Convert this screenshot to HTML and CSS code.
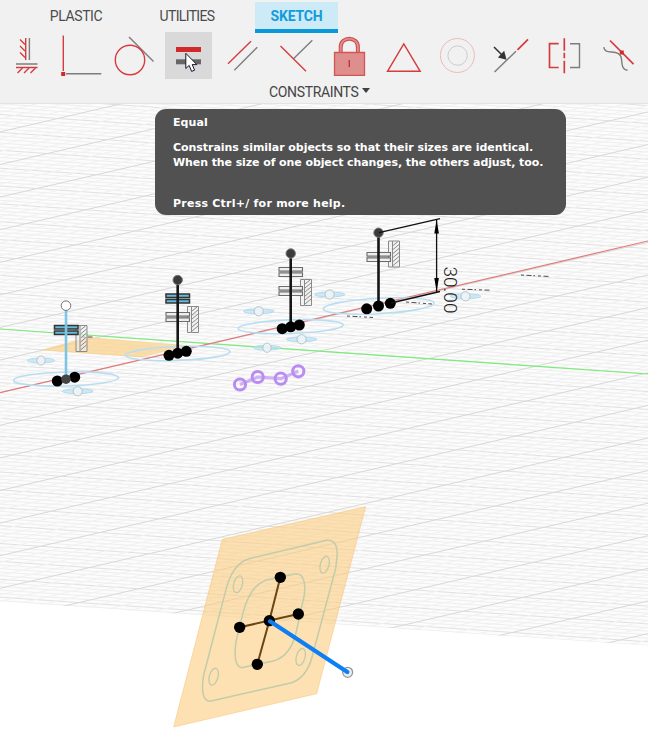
FILE: index.html
```html
<!DOCTYPE html>
<html lang="en">
<head>
<meta charset="utf-8">
<title>Sketch constraints</title>
<link rel="stylesheet" href="styles.css">
</head>
<body>
<header class="toolbar">
  <nav class="tabs">
    <span class="tab plastic">PLASTIC</span>
    <span class="tab utilities">UTILITIES</span>
    <span class="tab active"><b>SKETCH</b></span>
  </nav>
  <div class="tools">
    <svg class="tool" viewBox="3 32 47 47"><g class="r"><path d="M25.7 38V60M16 67.5H37.5"/><path d="M20 39.5l5 5M20 46l5 5M20 52.5l5 5M22.5 68l-5 5M29 68l-5 5M35.5 68l-5 5"/></g><path class="k" d="M29.4 38V60M16 64H37.5"/></svg>
    <svg class="tool" viewBox="57 32 47 47"><path class="r" d="M63.3 35.5V71"/><path class="rf" d="M61.2 72h4v4h-4z"/><path class="k" d="M66 73.8H101.3"/></svg>
    <svg class="tool" viewBox="111 32 47 47"><path class="k" d="M129 37l24.5 24.5"/><circle class="r" cx="130" cy="60" r="14.7"/></svg>
    <svg class="tool selected" viewBox="165 32 47 47"><path class="rf" d="M176 47h25v5h-25z"/><path fill="#666" d="M176 59.3h25v5h-25z"/><path d="M185.8 53.3v15.2l3.4-3.1 2.4 6 3-1.2-2.4-5.6h4.6z" fill="#fff" stroke="#151526" stroke-width="1"/></svg>
    <svg class="tool" viewBox="219 32 47 47"><path class="r" d="M228 63.8L251 41.2"/><path class="k" d="M234.3 70.3L257.3 47.3"/></svg>
    <svg class="tool" viewBox="273 32 47 47"><path class="k" d="M293.5 58.8L312.3 40.2"/><path class="r" d="M280.5 46L306 71.3"/></svg>
    <svg class="tool" viewBox="327 32 47 47"><path d="M340.7 53v-6c0-11 17.2-11 17.2 0v6" fill="none" stroke="#cf5050" stroke-width="4"/><path d="M340.7 52v-5c0-11 17.2-11 17.2 0v5" fill="none" stroke="#e09090" stroke-width="1.7"/><path d="M334.5 52.5h30v22.8h-30z" fill="#df8e8e" stroke="#d25555" stroke-width="1.3"/><path d="M349.3 60v7" stroke="#bd3434" stroke-width="1.4"/></svg>
    <svg class="tool" viewBox="381 32 47 47"><path class="r" d="M403.8 43.8L387.5 71.3H420.2z"/></svg>
    <svg class="tool" viewBox="435 32 47 47"><circle cx="457.4" cy="55.5" r="17" fill="none" stroke="#efb9b9"/><circle cx="457.6" cy="55.6" r="9.7" fill="none" stroke="#ccc"/></svg>
    <svg class="tool" viewBox="489 32 47 47"><path class="k" d="M494.5 72L516 51.2"/><path class="r thick" d="M517.5 49.8L528 39.3"/><path d="M494 47l8 8" stroke="#333" stroke-width="1.6"/><path d="M506.5 59.8l-2.3-9-6.3 6.7z" fill="#333"/></svg>
    <svg class="tool" viewBox="543 32 47 47"><path class="r thick" d="M558.7 43.7H549.5V67.5H558.7M564.3 38.3V50.7M564.3 52.8V58.3M564.3 60.7V73.2"/><path class="k" d="M570 43.7H579.5V67.5H570"/></svg>
    <svg class="tool" viewBox="597 32 47 47"><path class="k" d="M603.7 47.2c.8 4.5 3.8 4.6 7.5 4.8 6 .3 9.8 1.5 10.3 7 .4 5 .3 10.5 6 11.2"/><path class="r thick" d="M610 40.5L633.5 64.2"/><path class="rf" d="M619.8 50.5h4v4h-4z"/></svg>
  </div>
  <div class="group-name"><span>CONSTRAINTS</span><i class="caret"></i></div>
</header>
<main class="viewport">
  <svg class="scene" viewBox="0 104 648 641">
    <defs>
      <clipPath id="ground"><path d="M0 104H648V645.5L0 601.5z"/></clipPath>
      <g id="eq"><path d="M0 .5h23.5v3.6H0zM0 5.9h23.5v3.6H0z"/></g>
      <g id="hatch"><path d="M.5.5h4v26h-4zM4.5.5h7v26h-7" fill="#eee" fill-opacity=".6"/><path d="M5 5l5-4M5 9l6-5M5 13l6-5M5 17l6-5M5 21l6-5M5 25l6-5"/></g>
      <g id="ring"><ellipse rx="15.3" ry="2.4" fill="#b4def2" fill-opacity=".6" stroke="#b0dcf0" stroke-width="1"/><circle r="4.6" fill="#f3f6f8" fill-opacity=".8" stroke="#b4c1c8"/></g>
    </defs>
    <path d="M0 104H648V645.5L0 601.5z" fill="#fcfcfc"/>
    <g id="grid" clip-path="url(#ground)"></g>
    <path d="M40 350.3L88 337 189 345.5 142 357.5z" fill="#fbcf83" opacity=".68"/>
    <path d="M0 329L648 374" stroke="#7aec7a" stroke-width="1.2"/>
    <path d="M0 392.7L648 241" stroke="#e27b7b" stroke-width="1.2"/>
    <g fill="none" stroke="#b9def1" stroke-width="1.6">
      <ellipse cx="66" cy="379" rx="52.5" ry="7" transform="rotate(-1.5 66 379)"/>
      <ellipse cx="177.7" cy="353.5" rx="52.3" ry="7" transform="rotate(-2 177.7 353.5)"/>
      <ellipse cx="290.6" cy="326.7" rx="52.5" ry="6.8" transform="rotate(-2 290.6 326.7)"/>
      <ellipse cx="378.7" cy="306" rx="55.5" ry="7.7" transform="rotate(-3 378.7 306)"/>
    </g>
    <use href="#ring" transform="translate(41 360.5) scale(.9 1)"/><use href="#ring" x="77.7" y="391.3"/>
    <use href="#ring" x="258.7" y="311.3"/><use href="#ring" x="329.6" y="294.5"/>
    <use href="#ring" x="301.6" y="339.3"/><use href="#ring" transform="translate(267 347.7) scale(.9 1)"/><use href="#ring" x="465.5" y="296.3"/>
    <g stroke="#222" stroke-width="1" stroke-dasharray="3 2.5 5 2 1.5 3" opacity=".8">
      <path d="M347 316l26 1.5M406 302l26 2M462 289.2l29 1M521 275l29 1.5M82 337h11"/>
    </g>
    <g stroke="#8a8a8a" stroke-width="1" fill="none">
      <use href="#hatch" x="75.5" y="325"/><use href="#hatch" x="187" y="306"/><use href="#hatch" x="300" y="279"/><use href="#hatch" x="388" y="240.5"/>
    </g>
    <g stroke="#6c6c6c" stroke-width="1.1" fill="#eee">
      <use href="#eq" x="166" y="312"/><use href="#eq" x="279" y="267"/><use href="#eq" x="279" y="286"/><use href="#eq" x="367" y="252"/>
    </g>
    <g stroke="#333" stroke-width="1.5" fill="#65bbdd"><use href="#eq" x="54.5" y="325"/><use href="#eq" x="166" y="293.5"/></g>
    <path d="M66 306V379" stroke="#7dc5e6" stroke-width="2.6"/>
    <path d="M177.7 280V353M290.7 254V327M378.5 233V306" stroke="#161616" stroke-width="2.6"/>
    <circle cx="66" cy="305.7" r="4.8" fill="#fff" stroke="#777"/>
    <g fill="#3b3b3b" stroke="#777" stroke-width="1"><circle cx="177.7" cy="280" r="4.7"/><circle cx="290.7" cy="253.5" r="4.7"/><circle cx="378.5" cy="232.7" r="4.7"/></g>
    <g><circle cx="57.3" cy="381" r="5.5"/><circle cx="74.7" cy="377.2" r="5.5"/><circle cx="66" cy="379.2" r="4.8" fill="#444"/>
      <circle cx="169" cy="355.3" r="5.5"/><circle cx="177.7" cy="353.2" r="5.5"/><circle cx="186.3" cy="351.3" r="5.5"/>
      <circle cx="282.2" cy="328.7" r="5.5"/><circle cx="290.7" cy="326.8" r="5.5"/><circle cx="299.3" cy="325" r="5.5"/>
      <circle cx="366.7" cy="308.8" r="5.5"/><circle cx="378.5" cy="306" r="5.5"/><circle cx="390.3" cy="303.3" r="5.5"/></g>
    <path d="M379 232.7L440 218.7M391 303L440 291.5M436.6 219.5V292" fill="none" stroke="#111" stroke-width="1.3"/>
    <path d="M436.6 220l-2.3 13.500h4.6zM436.6 291.5l-2.3-13.500h4.6z"/>
    <text class="dimension" transform="translate(443.5 266.5) rotate(90)" textLength="47">30.00</text>
    <g fill="none" stroke="#b98cf0"><path d="M240 384.5L257.7 377 280.7 378.7 298.3 371.3" stroke-width="3.2" opacity=".65"/>
      <g stroke-width="3"><circle cx="240" cy="384.5" r="5.6"/><circle cx="257.7" cy="377" r="5.6"/><circle cx="280.7" cy="378.7" r="5.6"/><circle cx="298.3" cy="371.3" r="5.6"/></g></g>
    <g transform="translate(160 500) scale(.33333)">
      <path d="M187 118L617 20 470 581 41 681z" fill="#fbcb7c" fill-opacity=".58" stroke="#f8c77c" stroke-width="2.5" stroke-opacity=".7"/>
      <g fill="none" stroke="#c2ccaa" stroke-width="4.6">
        <path d="M268 176L500 121Q538 117 530 180L527 205 457 468Q440 533 395 548L150 604Q119 602 131 525L195 280Q215 190 268 176z"/>
        <path d="M320 240L408 221Q440 222 433 285L410 390Q394 468 340 483L245 503Q218 498 228 425L250 335Q271 256 320 240z"/>
        <g stroke-width="4"><ellipse cx="234" cy="253" rx="13" ry="26" transform="rotate(15 234 253)"/><ellipse cx="494" cy="194" rx="13" ry="26" transform="rotate(15 494 194)"/><ellipse cx="161" cy="530" rx="13" ry="26" transform="rotate(15 161 530)"/><ellipse cx="422" cy="471" rx="13" ry="26" transform="rotate(15 422 471)"/></g>
      </g>
      <path d="M361 232L328 362 292 493M239 382L415 342" fill="none" stroke="#6a4614" stroke-width="6"/>
      <circle cx="361" cy="232" r="17"/><circle cx="415" cy="342" r="17"/><circle cx="328" cy="362" r="17"/><circle cx="239" cy="382" r="17"/><circle cx="292" cy="493" r="17"/>
      <circle cx="563" cy="517" r="15" fill="#e8edf2" stroke="#999" stroke-width="4"/>
      <path d="M330 364L562 516" stroke="#0d7ff5" stroke-width="12.5" stroke-linecap="round"/>
    </g>
  </svg>
  <aside class="tooltip">
    <p class="name">Equal</p>
    <p class="line">Constrains similar objects so that their sizes are identical.</p>
    <p class="line second">When the size of one object changes, the others adjust, too.</p>
    <p class="help">Press Ctrl+/ for more help.</p>
  </aside>
</main>
<script src="grid.js"></script>
</body>
</html>
```
FILE: styles.css
```css
* { box-sizing: border-box; }
body { margin: 0; width: 648px; height: 745px; overflow: hidden; background: #fff; font-family: Roboto, "Liberation Sans", sans-serif; }
.toolbar { height: 104px; background: #f1f1f1; border-bottom: 1px solid #e3e3e3; }
.tabs { display: flex; height: 32px; padding-top: 2px; font-size: 14px; line-height: 28px; color: #4b4b4b; }
.tab { text-align: center; white-space: nowrap; }
.plastic { margin-left: 36px; width: 80px; letter-spacing: -.4px; }
.utilities { margin-left: 31px; width: 80px; letter-spacing: -.65px; }
.active { margin-left: 28px; width: 83px; height: 31px; background: #cdeaf7; border-bottom: 4px solid #0b98d8; color: #129cdb; letter-spacing: -.2px; }
.active b { font-weight: 700; }
.tools { display: flex; gap: 7px; padding-left: 3px; height: 47px; }
.tool { width: 47px; height: 47px; flex: none; }
.selected { background: #d9d9d9; }
.r { fill: none; stroke: #d63c3f; stroke-width: 1.4; }
.thick { stroke-width: 1.7; }
.rf { fill: #cf292b; }
.k { fill: none; stroke: #7d7d7d; stroke-width: 1.4; }
.group-name { display: flex; gap: 4px; padding-left: 269px; height: 24px; font-size: 14px; line-height: 26px; letter-spacing: -.35px; color: #454545; }
.caret { margin-top: 9px; width: 0; height: 0; border: 4px solid transparent; border-top: 5px solid #404040; border-bottom: 0; }
.viewport { position: relative; height: 641px; }
.scene { display: block; width: 648px; height: 641px; }
.dimension { font: 19px Roboto, "Liberation Sans", sans-serif; font-weight: 300; fill: #222; }
.tooltip { position: absolute; left: 155px; top: 5px; width: 411px; height: 106px; padding: 6px 18px; border-radius: 11px; background: #515151; color: #fff; font: bold 11px/15px "DejaVu Sans", sans-serif; white-space: nowrap; }
.tooltip p { margin: 0; }
.tooltip .name { margin-bottom: 10px; letter-spacing: .1px; }
.tooltip .line { letter-spacing: -.04px; }
.tooltip .second { letter-spacing: -.09px; }
.tooltip .help { margin-top: 26px; letter-spacing: .24px; }
```
FILE: grid.js
```js
// Ground grid: every fifth line of each direction is a major line.
const grid = document.getElementById("grid");
function family(origin, step, slope, from, to, minor, major) {
  for (let i = from; i <= to; i++) {
    const y = origin + i * step;
    const line = document.createElementNS("http://www.w3.org/2000/svg", "path");
    line.setAttribute("d", `M0 ${y}L648 ${y + slope * 648}`);
    line.setAttribute("stroke", i % 5 === 0 ? major : minor);
    grid.appendChild(line);
  }
}
family(329, 3.575, 0.0690, -80, 78, "#eeeeee", "#e0e0e0");
family(392.7, 6.52, -0.2320, -46, 64, "#f1f1f1", "#d8d8d8");
```
